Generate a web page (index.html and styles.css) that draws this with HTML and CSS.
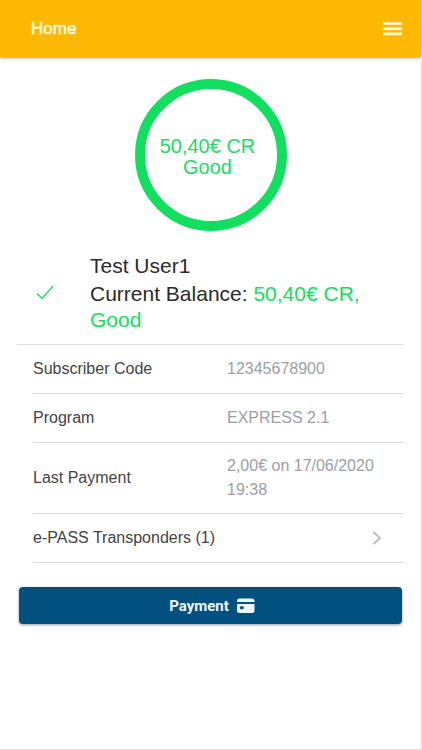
FILE: index.html
```html
<!DOCTYPE html>
<html lang="en">
<head>
<meta charset="utf-8">
<meta name="viewport" content="width=device-width, initial-scale=1">
<title>Home</title>
<link rel="stylesheet" href="styles.css">
</head>
<body>
<header class="toolbar">
  <h1 class="toolbar-title">Home</h1>
  <button class="menu-button" type="button" aria-label="Menu">
    <svg class="menu-icon" viewBox="0 0 20 14" aria-hidden="true"><path d="M1 1.5h19M1 6.7h19M1 11.9h19"/></svg>
  </button>
</header>
<main class="content">
  <div class="gauge">
    <span>50,40€ CR</span>
    <span>Good</span>
  </div>
  <section class="summary">
    <svg class="check-icon" viewBox="0 0 18 16" aria-hidden="true"><path d="M1 8.5L6 13.5L17 1"/></svg>
    <div class="summary-text">
      <h2 class="user-name">Test User1</h2>
      <p class="balance">Current Balance: <strong class="balance-value">50,40€ CR, Good</strong></p>
    </div>
  </section>
  <dl class="details">
    <div class="row"><dt>Subscriber Code</dt><dd>12345678900</dd></div>
    <div class="row"><dt>Program</dt><dd>EXPRESS 2.1</dd></div>
    <div class="row"><dt>Last Payment</dt><dd>2,00€ on 17/06/2020 19:38</dd></div>
  </dl>
  <a class="row row-link" href="#transponders">
    <span>e-PASS Transponders (1)</span>
    <svg class="chevron" viewBox="0 0 10 16" aria-hidden="true"><path d="M1.5 2L8 8L1.5 14"/></svg>
  </a>
  <button class="payment" type="button">
    Payment
    <svg class="card-icon" viewBox="0 0 18 16" aria-hidden="true"><path d="M0 4V3Q0 .5 2.500 .5H15Q17.500 .5 17.500 3V4Z"/><path fill-rule="evenodd" d="M0 6H17.500V12.500Q17.500 15 15 15H2.500Q0 15 0 12.500ZM4 8.200Q2.800 8.200 2.800 9.300V10.100Q2.800 11.200 4 11.200H5.500Q6.800 11.200 6.800 10.100V9.300Q6.800 8.200 5.500 8.200Z"/></svg>
  </button>
</main>
</body>
</html>
```
FILE: styles.css
```css
* {
  box-sizing: border-box;
}

body {
  display: flex;
  flex-direction: column;
  min-height: 100vh;
  margin: 0;
  border-right: 1px solid #dedede;
  border-bottom: 1px solid #dedede;
  background: #fff;
  color: #444;
  font: 16px/24px "Liberation Sans", Arial, sans-serif;
}

h1, h2, p, dl, dd {
  margin: 0;
  font-weight: 400;
}

.toolbar {
  display: flex;
  align-items: center;
  justify-content: space-between;
  height: 57px;
  padding: 0 19px 0 31px;
  background: #ffb803;
  color: #fff8e0;
  box-shadow: 0 1px 3px rgba(0, 0, 0, .4);
}

.toolbar-title {
  font-size: 17px;
  -webkit-text-stroke: 0.5px currentColor;
}

.menu-button {
  display: flex;
  padding: 0;
  border: 0;
  background: none;
  color: inherit;
}

.menu-icon {
  width: 20px;
  height: 14px;
  fill: none;
  stroke: currentColor;
  stroke-width: 2.6;
}

.content {
  display: flex;
  flex-direction: column;
  padding: 22px 17px 24px;
}

.gauge {
  display: flex;
  flex-direction: column;
  align-items: center;
  justify-content: center;
  align-self: center;
  width: 152px;
  height: 152px;
  padding: 4px 6px 0 0;
  border: 10px solid #12df60;
  border-radius: 50%;
  color: #24d868;
  font-size: 20px;
  line-height: 21px;
}

.summary {
  display: flex;
  align-items: center;
  gap: 36px;
  padding: 22px 16px 11px 19px;
  border-bottom: 1px solid #dedede;
}

.check-icon {
  flex: none;
  width: 18px;
  height: 16px;
  fill: none;
  stroke: #24d868;
  stroke-width: 1.3;
}

.summary-text {
  color: #2b2b2b;
  font-size: 21px;
  line-height: 26px;
}

.user-name {
  margin-bottom: 2px;
  font-size: inherit;
}

.balance-value {
  color: #12df60;
  font-weight: 400;
}

.row {
  display: flex;
  align-items: center;
  min-height: 49px;
  margin-left: 16px;
  padding: 11px 16px 11px 0;
  border-bottom: 1px solid #dedede;
}

.row dt {
  flex: none;
  width: 194px;
}

.row dd {
  color: #9d9ea4;
}

.row-link {
  justify-content: space-between;
  padding-right: 22px;
  color: inherit;
  text-decoration: none;
}

.chevron {
  width: 10px;
  height: 16px;
  fill: none;
  stroke: #bbb;
  stroke-width: 1.8;
}

.payment {
  display: flex;
  align-items: center;
  justify-content: center;
  gap: 8px;
  height: 37px;
  margin: 24px 2px 0;
  padding: 0 0 0 3px;
  border: 0;
  border-radius: 4px;
  background: #02507f;
  color: #eef7fd;
  font: 700 15px/20px Roboto, sans-serif;
  box-shadow: 0 1px 3px rgba(0, 0, 0, .4);
}

.card-icon {
  width: 18px;
  height: 16px;
  fill: currentColor;
}
```
